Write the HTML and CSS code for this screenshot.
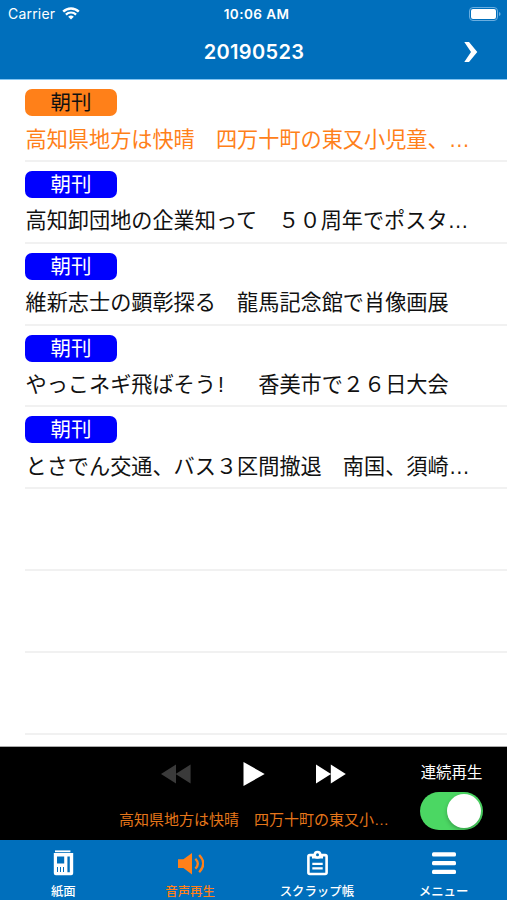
FILE: index.html
```html
<!DOCTYPE html>
<html lang="ja">
<head>
    <meta charset="UTF-8">
    <meta name="viewport" content="width=device-width, initial-scale=1.0">
    <title>音声再生</title>
    <link rel="stylesheet" href="styles.css">
</head>
<body>

<div class="app">
    <header class="header">
        <div class="status">
            <div class="carrier">
                <span>Carrier</span>
                <svg class="wifi" width="18" height="13" viewBox="0 0 18 13" fill="none" stroke="#fff">
                    <path d="M1.2 4.7a11 11 0 0 1 15.6 0" stroke-width="2.4"/>
                    <path d="M3.9 7.6a7.2 7.2 0 0 1 10.2 0" stroke-width="2.2"/>
                    <path d="M9 12.6L6.2 9.8a4 4 0 0 1 5.6 0z" fill="#fff" stroke="none"/>
                </svg>
            </div>
            <span class="time">10:06 AM</span>
            <svg class="battery" width="32" height="14" viewBox="0 0 32 14">
                <rect x=".5" y=".5" width="28" height="13" rx="3.5" fill="none" stroke="#6aaee0"/>
                <rect x="2" y="2" width="25" height="10" rx="2" fill="#fff"/>
                <path d="M30 5v4q1.6-.6 1.6-2T30 5z" fill="#6aaee0"/>
            </svg>
        </div>
        <div class="navbar">
            <h1 class="date">20190523</h1>
            <svg class="next" width="14" height="20" viewBox="0 0 14 20">
                <path d="M.3 0H5l8.3 10L5 20H.3L7 10z" fill="#fff"/>
            </svg>
        </div>
    </header>

    <ul class="list">
        <li class="row playing">
            <span class="badge">朝刊</span>
            <p class="title">高知県地方は快晴　四万十町の東又小児童、…</p>
        </li>
        <li class="row">
            <span class="badge">朝刊</span>
            <p class="title">高知卸団地の企業知って　５０周年でポスタ…</p>
        </li>
        <li class="row">
            <span class="badge">朝刊</span>
            <p class="title">維新志士の顕彰探る　龍馬記念館で肖像画展</p>
        </li>
        <li class="row">
            <span class="badge">朝刊</span>
            <p class="title">やっこネギ飛ばそう<span class="mark">!</span>　香美市で２６日大会</p>
        </li>
        <li class="row">
            <span class="badge">朝刊</span>
            <p class="title">とさでん交通、バス３区間撤退　南国、須崎…</p>
        </li>
        <li class="row"></li>
        <li class="row"></li>
        <li class="row"></li>
    </ul>

    <section class="player">
        <div class="controls">
            <div class="buttons">
                <svg width="30" height="20" viewBox="0 0 30 20" fill="#3a3a3a">
                    <path d="M0 10L15 .6v18.8zM14.6 10L29.6 .6v18.8z"/>
                </svg>
                <svg width="22" height="24" viewBox="0 0 22 24" fill="#fff">
                    <path d="M.5 0v24L21.7 12z"/>
                </svg>
                <svg width="30" height="20" viewBox="0 0 30 20" fill="#fff">
                    <path d="M0 .6v18.8L15 10zM14.8 .6v18.8L29.8 10z"/>
                </svg>
            </div>
            <p class="now">高知県地方は快晴　四万十町の東又小…</p>
        </div>
        <div class="repeat">
            <span class="label">連続再生</span>
            <div class="switch"><div class="knob"></div></div>
        </div>
    </section>

    <nav class="tabs">
        <a class="tab">
            <svg width="28" height="28" viewBox="0 0 28 28">
                <path d="M6 1.4h15.4v1.8H6z" fill="#fff"/>
                <path fill="#fff" fill-rule="evenodd" d="M4.8 4h19.4v20.2q0 2-2 2H6.8q-2 0-2-2zM8 7.6v6.8h7.2V7.6zM18.4 7.6v15.6h2.4V7.6zM8 18v5h1v-5zM11 18v5h1v-5zM14 18v5h1v-5z"/>
            </svg>
            <span>紙面</span>
        </a>
        <a class="tab active">
            <svg width="28" height="28" viewBox="0 0 28 28" fill="none" stroke="#ff8019" stroke-width="2.3">
                <path d="M2 10.2H7.4L16 4v21.4L7.4 19H2z" fill="#ff8019" stroke="none"/>
                <path d="M19.4 9.8q4.8 5 0 9.8M23.2 6q8.2 8.6 0 17.2"/>
            </svg>
            <span>音声再生</span>
        </a>
        <a class="tab">
            <svg width="28" height="28" viewBox="0 0 28 28" fill="none" stroke="#fff">
                <rect x="5.4" y="6.1" width="18.2" height="18.9" rx="1.5" stroke-width="2.6"/>
                <path d="M9 5.5h11v4H9z" fill="#fff" stroke="none"/>
                <circle cx="14.5" cy="5.8" r="4" fill="#fff" stroke="none"/>
                <circle cx="14.5" cy="5.8" r="1.5" fill="#006fbc" stroke="none"/>
                <path d="M9.3 14.8h10.4M9.3 19.3h10.4" stroke-width="2.3"/>
            </svg>
            <span>スクラップ帳</span>
        </a>
        <a class="tab">
            <svg width="28" height="28" viewBox="0 0 28 28" fill="#fff">
                <rect x="2" y="3.2" width="24" height="4.2" rx="1.5"/>
                <rect x="2" y="12" width="24" height="4.2" rx="1.5"/>
                <rect x="2" y="20.8" width="24" height="4.2" rx="1.5"/>
            </svg>
            <span>メニュー</span>
        </a>
    </nav>
</div>

</body>
</html>
```
FILE: styles.css
```css
* {
    box-sizing: border-box;
}
body {
    margin: 0;
    background-color: #fff;
    font-family: "Liberation Sans", "Noto Sans CJK JP", sans-serif;
}
h1, p, ul {
    margin: 0;
    padding: 0;
}
svg {
    display: block;
}
.app {
    display: flex;
    flex-direction: column;
    height: 900px;
    overflow: hidden;
}
.header {
    height: 80px;
    background-color: #006fbc;
    border-bottom: 1px solid #83c5f2;
    color: #fff;
    font-family: Inter, sans-serif;
}
.status {
    display: grid;
    grid-template-columns: 1fr auto 1fr;
    align-items: center;
    height: 27px;
    padding: 0 6px 0 8px;
}
.carrier {
    display: flex;
    align-items: center;
    gap: 7px;
    font-size: 14px;
    letter-spacing: 0.2px;
}
.time {
    padding-left: 4px;
    font-size: 13.5px;
    font-weight: 600;
    letter-spacing: 0.45px;
}
.battery {
    justify-self: end;
}
.navbar {
    display: grid;
    grid-template-columns: 1fr auto 1fr;
    align-items: center;
    height: 50px;
    padding: 0 29px;
}
.date {
    grid-column: 2;
    padding-left: 1px;
    font-size: 20px;
    font-weight: 600;
    letter-spacing: 0.35px;
}
.next {
    justify-self: end;
}
.list {
    height: 667px;
    padding-left: 25px;
    overflow: hidden;
    list-style: none;
}
.row {
    height: 81.85px;
    padding-top: 9px;
    border-bottom: 2px solid #f1f1f1;
}
.badge {
    display: block;
    width: 92px;
    height: 27px;
    border-radius: 7px;
    background-color: #0000ff;
    color: #fff;
    font-size: 20.5px;
    line-height: 28px;
    text-align: center;
}
.title {
    margin-top: 7.5px;
    padding-left: 0.5px;
    color: #111;
    font-size: 21.17px;
    line-height: 32px;
    white-space: nowrap;
}
.mark {
    display: inline-block;
    width: 1em;
    padding-left: 2px;
}
.playing .badge {
    background-color: #ff8019;
    color: #111;
}
.playing .title {
    color: #ff8019;
}
.player {
    display: flex;
    justify-content: space-between;
    height: 93px;
    padding-right: 24px;
    padding-left: 119px;
    background-color: #000;
    box-shadow: 0 -1px 0 #aaa;
}
.buttons {
    display: flex;
    justify-content: space-between;
    align-items: center;
    width: 185px;
    height: 24px;
    margin: 15px 0 0 42px;
}
.now {
    margin-top: 23px;
    color: #e5761a;
    font-size: 15px;
    line-height: 22px;
    white-space: nowrap;
}
.repeat {
    display: flex;
    flex-direction: column;
    align-items: center;
    padding-top: 15px;
}
.label {
    color: #fff;
    font-size: 15.4px;
    line-height: 22px;
}
.switch {
    display: flex;
    justify-content: flex-end;
    width: 63px;
    height: 38px;
    margin-top: 8px;
    padding: 2px;
    border-radius: 19px;
    background-color: #4bd763;
}
.knob {
    width: 34px;
    height: 34px;
    border-radius: 50%;
    background-color: #fff;
    box-shadow: 0 2px 4px rgba(0, 0, 0, 0.25);
}
.tabs {
    display: grid;
    grid-template-columns: repeat(4, 1fr);
    height: 60px;
    background-color: #006fbc;
}
.tab {
    display: flex;
    flex-direction: column;
    align-items: center;
    padding-top: 9px;
    color: #fff;
    font-size: 12.4px;
    font-weight: 500;
    line-height: 18px;
    white-space: nowrap;
}
.tab span {
    margin-top: 6px;
}
.tab.active {
    color: #ff8019;
}
```
